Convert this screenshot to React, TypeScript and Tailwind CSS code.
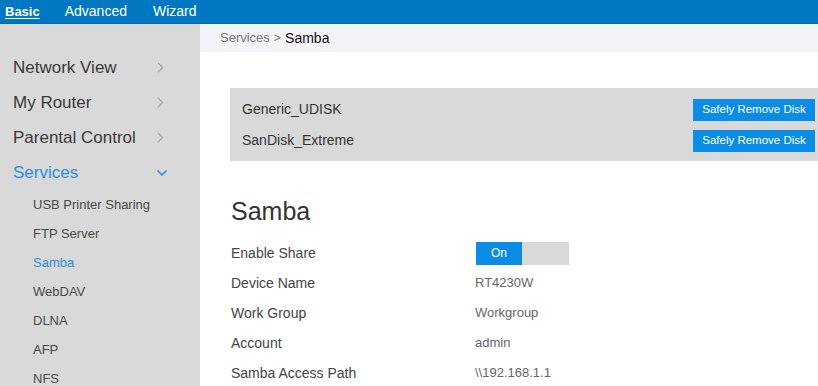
import { ChevronDown, ChevronRight } from "lucide-react";

const menu = ["Network View", "My Router", "Parental Control"];
const subMenu = ["USB Printer Sharing", "FTP Server", "Samba", "WebDAV", "DLNA", "AFP", "NFS"];
const disks = ["Generic_UDISK", "SanDisk_Extreme"];
const fields = [
  { label: "Device Name", value: "RT4230W" },
  { label: "Work Group", value: "Workgroup" },
  { label: "Account", value: "admin" },
  { label: "Samba Access Path", value: "\\\\192.168.1.1" },
];

export default function App() {
  return (
    <div className="flex h-[386px] w-[818px] flex-col overflow-hidden bg-white font-['Liberation_Sans',Arial,sans-serif]">
      <header className="flex h-[24px] shrink-0 items-center border-b border-[#0a68a3] bg-[#0078c1] text-[13px] text-white">
        <span className="ml-[5px] font-bold underline underline-offset-2">Basic</span>
        <span className="ml-[25px] text-[14px]">Advanced</span>
        <span className="ml-[26px] text-[14px]">Wizard</span>
      </header>

      <div className="flex flex-1">
        <aside className="w-[200px] shrink-0 bg-[#d9d9d9] pt-[26px]">
          {menu.map((m) => (
            <div key={m} className="flex h-[35px] items-center justify-between pl-[13px] pr-[31px] text-[17px] text-[#3a3a3a]">
              <span>{m}</span>
              <ChevronRight size={17} strokeWidth={1.8} className="text-[#a8a8a8]" />
            </div>
          ))}
          <div className="flex h-[35px] items-center justify-between pl-[13px] pr-[30px] text-[17px] text-[#2a8de2]">
            <span>Services</span>
            <ChevronDown size={16} strokeWidth={2.5} />
          </div>
          {subMenu.map((s) => (
            <div
              key={s}
              className={`flex h-[29px] items-center pl-[33px] text-[13px] ${s === "Samba" ? "text-[#2a8de2]" : "text-[#4a4a4a]"}`}
            >
              {s}
            </div>
          ))}
        </aside>

        <main className="flex-1">
          <div className="flex h-[28px] items-center bg-[#f4f4f8] pl-[20px]">
            <span className="text-[13px] text-[#777]">Services &gt;</span>
            <span className="ml-1 text-[14px] text-[#111]">Samba</span>
          </div>

          <div className="pl-[30px]">
            <div className="mt-[36px] bg-[#d9d9d9] pb-[5px] pl-[12px] pr-[3px] pt-[6px]">
              {disks.map((d) => (
                <div key={d} className="flex h-[31px] items-center justify-between text-[14px] text-[#333]">
                  <span>{d}</span>
                  <button className="h-[22px] w-[122px] bg-[#0b8de6] text-[11.5px] text-white">Safely Remove Disk</button>
                </div>
              ))}
            </div>

            <h1 className="ml-[1px] mt-[36px] text-[25px] leading-[28px] text-[#333]">Samba</h1>

            <div className="ml-[1px] mt-[13px]">
              <div className="flex h-[30px] items-center">
                <span className="w-[245px] text-[14px] text-[#444]">Enable Share</span>
                <div className="flex h-[23px] w-[93px]">
                  <div className="flex w-[46px] items-center justify-center bg-[#0b8de6] text-[12px] text-white">On</div>
                  <div className="flex-1 bg-[#d9d9d9]" />
                </div>
              </div>
              {fields.map((f) => (
                <div key={f.label} className="flex h-[30px] items-center">
                  <span className="w-[244px] text-[14px] text-[#444]">{f.label}</span>
                  <span className="text-[13px] text-[#666]">{f.value}</span>
                </div>
              ))}
            </div>
          </div>
        </main>
      </div>
    </div>
  );
}
